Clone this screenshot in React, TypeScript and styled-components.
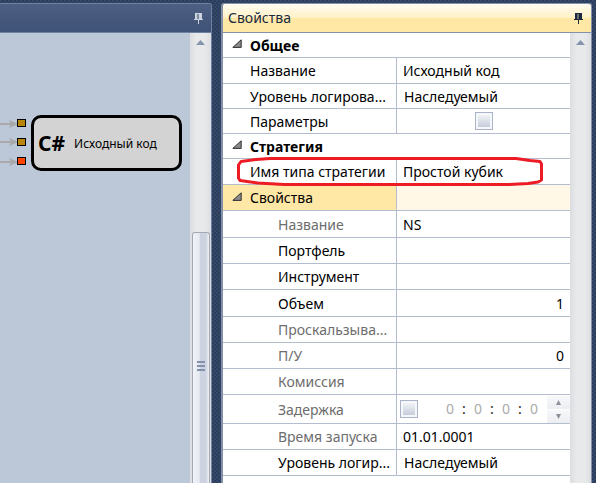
import React from "react";
import styled, { createGlobalStyle, css } from "styled-components";

const GlobalStyle = createGlobalStyle`
  * { box-sizing: border-box; }
  body {
    margin: 0;
    background-color: #2c3d5b;
    background-image:
      radial-gradient(circle at 1px 1px, #35496a 1px, transparent 1px),
      radial-gradient(circle at 3px 3px, #35496a 1px, transparent 1px);
    background-size: 4px 4px;
    font-family: "Noto Sans", "Open Sans", sans-serif;
    font-size: 14px;
    color: #000;
  }
  button, input, select { font: inherit; color: inherit; }
`;

const Workspace = styled.main`
  display: grid;
  grid-template-columns: minmax(0, 4fr) minmax(0, 7fr);
  gap: 9px;
  height: 100vh;
  padding: 3px 4px 0 0;
  overflow: hidden;
`;

const Panel = styled.section<{ $active?: boolean }>`
  display: flex;
  flex-direction: column;
  min-width: 0;
  min-height: 0;
  border: solid ${(p) => (p.$active ? "#8591a9" : "#6f80a0")};
  border-width: ${(p) => (p.$active ? "1px 1px 0 2px" : "1px 1px 0 0")};
  border-radius: ${(p) => (p.$active ? "3px 3px 0 0" : "0 3px 0 0")};
  overflow: hidden;
`;

const TitleBar = styled.header<{ $active?: boolean }>`
  display: flex;
  flex: none;
  align-items: center;
  justify-content: space-between;
  height: 29px;
  padding: 0 8px 0 5px;
  border-bottom: 1px solid ${(p) => (p.$active ? "#8591a9" : "#6f80a0")};
  color: ${(p) => (p.$active ? "#1b293e" : "#ced4df")};
  background: ${(p) =>
    p.$active
      ? "linear-gradient(#fffcf2, #fff0c4 50%, #ffe8a6 51%, #ffe8a6)"
      : "linear-gradient(#4d6082, #3f5277)"};
`;

const Title = styled.h2`
  margin: 0;
  font-size: 14px;
  line-height: 20px;
  font-weight: 400;
`;

const PinButton = styled.button`
  display: flex;
  padding: 0;
  border: 0;
  background: none;
`;

const PanelBody = styled.div`
  display: flex;
  flex: 1;
  min-height: 0;
`;

const Canvas = styled.div`
  position: relative;
  flex: 1;
  min-width: 0;
  overflow: hidden;
  background: #bcc7d8;
`;

const Links = styled.svg`
  position: absolute;
  left: 0;
  top: 84px;
`;

const Node = styled.article`
  position: absolute;
  left: 31px;
  top: 82px;
  display: flex;
  align-items: center;
  gap: 9px;
  width: 151px;
  height: 56px;
  padding-left: 4px;
  border: 3px solid #000;
  border-radius: 10px;
  background: #d3d3d3;
  font-size: 12px;
  white-space: nowrap;
`;

const NodeMark = styled.strong`
  font-size: 21px;
  font-weight: 700;
`;

const ScrollTrack = styled.div`
  display: flex;
  flex: none;
  flex-direction: column;
  align-items: center;
  width: 21px;
  background: linear-gradient(90deg, #dcdde0, #e8e9eb 30%, #e8e9eb 70%, #dcdee2);
`;

const ScrollUp = styled.button`
  display: flex;
  justify-content: center;
  width: 100%;
  padding: 7px 0 0;
  border: 0;
  background: none;
`;

const Thumb = styled.div`
  display: flex;
  flex: 1;
  flex-direction: column;
  align-items: center;
  width: 18px;
  margin-top: 187px;
  padding-top: 128px;
  border: 1px solid #a3a8b3;
  border-bottom: 0;
  border-radius: 3px 3px 0 0;
  background: linear-gradient(90deg, #f2f4f8, #e4e8f0 40%, #ccd2df 45%, #ccd2df 80%, #eef0f5);
`;

const Sheet = styled.div`
  flex: 1;
  min-width: 0;
  background: #fff;
`;

const line = "#b4bccf";

const GroupRow = styled.div`
  display: flex;
  align-items: center;
  height: 25px;
  border-bottom: 1px solid ${line};
`;

const GroupName = styled.h3`
  margin: 0;
  padding-top: 2px;
  font-size: 14px;
  line-height: 20px;
  font-weight: 700;
`;

const Expander = styled.button`
  display: flex;
  flex: none;
  width: 27px;
  padding: 0 0 4px 9px;
  border: 0;
  background: none;
`;

const Row = styled.div<{ $height: number; $selected?: boolean }>`
  position: relative;
  display: grid;
  grid-template-columns: 174px minmax(0, 1fr);
  height: ${(p) => p.$height}px;
  border-bottom: 1px solid ${line};
  background: ${(p) => (p.$selected ? "#fff8e7" : "#fff")};
`;

const NameCell = styled.div<{ $nested?: boolean; $selected?: boolean; $muted?: boolean }>`
  display: flex;
  align-items: center;
  min-width: 0;
  padding-top: 1px;
  padding-left: ${(p) => (p.$nested ? 55 : p.$selected ? 0 : 27)}px;
  border-right: 1px solid ${line};
  line-height: 20px;
  white-space: nowrap;
  color: ${(p) => (p.$muted ? "#6d6d6d" : "#000")};
  background: ${(p) => (p.$selected ? "#ffe8a6" : "transparent")};
`;

const ValueCell = styled.div<{ $center?: boolean; $flush?: boolean }>`
  display: flex;
  align-items: center;
  min-width: 0;
  padding-top: ${(p) => (p.$center || p.$flush ? 0 : 1)}px;
  justify-content: ${(p) => (p.$center ? "center" : "flex-start")};
`;

const fieldStyle = css`
  width: 100%;
  height: 20px;
  border: 0;
  outline: 0;
  background: transparent;
  line-height: 20px;
`;

const TextField = styled.input<{ $number?: boolean }>`
  ${fieldStyle}
  padding: 0 6px;
  text-align: ${(p) => (p.$number ? "right" : "left")};
`;

const Choice = styled.select`
  ${fieldStyle}
  padding: 0 7px;
  appearance: none;
`;

const Tick = styled.input`
  appearance: none;
  flex: none;
  width: 18px;
  height: 18px;
  margin: 0;
  padding: 2px;
  border: 1px solid #aab3c8;
  background: linear-gradient(#f0f2f6, #c6cddb) content-box, #f6f7fa;
`;

const TimeEditor = styled.div`
  display: flex;
  flex: 1;
  align-items: center;
  align-self: stretch;
  gap: 6px;
  padding-left: 3px;
`;

const TimeParts = styled.div`
  display: flex;
  flex: 1;
  justify-content: flex-end;
  color: #1e1e1e;
  line-height: 20px;
`;

const TimePart = styled.input`
  width: 14px;
  height: 20px;
  padding: 0;
  border: 0;
  background: transparent;
  color: #acacac;
  text-align: center;
`;

const Colon = styled.span`
  width: 14px;
  text-align: center;
`;

const Spinner = styled.div`
  display: flex;
  flex-direction: column;
  gap: 1px;
  width: 23px;
`;

const SpinButton = styled.button`
  display: flex;
  align-items: center;
  justify-content: center;
  height: 13px;
  padding: 0;
  border: 0;
  background: linear-gradient(#f7f8fa, #eceef2);
`;

const Marker = styled.svg`
  position: absolute;
  left: 13px;
  top: -3px;
  z-index: 1;
  pointer-events: none;
`;

const Pin = ({ dark }: { dark?: boolean }) => (
  <svg width="9" height="11" viewBox="0 0 9 11" shapeRendering="crispEdges">
    <path d="M1 0h7v6h1v1H5v4H4V7H0V6h1z" fill="currentColor" />
    <path d="M3 1h2v5H3z" fill={dark ? "#6c6f70" : "#7b8aa5"} />
  </svg>
);

const ArrowUp = () => (
  <svg width="9" height="5" viewBox="0 0 9 5">
    <path d="M0 5L4.5 0L9 5z" fill="#8694ad" />
  </svg>
);

const ExpandGlyph = () => (
  <svg width="10" height="9" viewBox="0 0 10 9">
    <path d="M.8 8.4L9.2.8V8.4z" fill="#8a8a8a" stroke="#303030" strokeWidth="1" />
  </svg>
);

const SpinGlyph = ({ down }: { down?: boolean }) => (
  <svg width="5" height="5" viewBox="0 0 5 5">
    <path d={down ? "M0 0H5L2.5 5z" : "M0 5L2.5 0L5 5z"} fill="#8d919b" />
  </svg>
);

const Grip = () => (
  <svg width="8" height="10" viewBox="0 0 8 10" shapeRendering="crispEdges">
    <path d="M0 0h8v2H0zM0 4h8v2H0zM0 8h8v2H0z" fill="#8392aa" />
  </svg>
);

type Item = {
  id: string;
  label: string;
  height: number;
  nested?: boolean;
  muted?: boolean;
  kind?: "text" | "number" | "choice" | "check" | "time";
  value?: string;
  marked?: boolean;
};

const general: Item[] = [
  { id: "title", label: "Название", height: 26, value: "Исходный код" },
  { id: "log", label: "Уровень логирова...", height: 25, kind: "choice", value: "Наследуемый" },
  { id: "params", label: "Параметры", height: 25, kind: "check" },
];

const strategy: Item[] = [
  { id: "type", label: "Имя типа стратегии", height: 26, value: "Простой кубик", marked: true },
];

const nested: Item[] = [
  { id: "name", label: "Название", height: 27, muted: true, value: "NS" },
  { id: "portfolio", label: "Портфель", height: 26 },
  { id: "security", label: "Инструмент", height: 26 },
  { id: "volume", label: "Объем", height: 27, kind: "number", value: "1" },
  { id: "slippage", label: "Проскальзыва...", height: 26, muted: true },
  { id: "pnl", label: "П/У", height: 26, muted: true, kind: "number", value: "0" },
  { id: "commission", label: "Комиссия", height: 26, muted: true },
  { id: "latency", label: "Задержка", height: 29, muted: true, kind: "time" },
  { id: "started", label: "Время запуска", height: 26, muted: true, value: "01.01.0001" },
  { id: "nested-log", label: "Уровень логир...", height: 26, kind: "choice", value: "Наследуемый" },
].map((item) => ({ ...item, nested: true }) as Item);

const Editor = ({ item }: { item: Item }) => {
  switch (item.kind) {
    case "check":
      return <Tick type="checkbox" id={item.id} />;
    case "choice":
      return (
        <Choice id={item.id} defaultValue={item.value}>
          <option>{item.value}</option>
        </Choice>
      );
    case "time":
      return (
        <TimeEditor>
          <Tick type="checkbox" id={item.id} />
          <TimeParts>
            {["Дни", "Часы", "Минуты", "Секунды"].map((part, i) => (
              <React.Fragment key={part}>
                {i > 0 && <Colon>:</Colon>}
                <TimePart aria-label={part} defaultValue="0" />
              </React.Fragment>
            ))}
          </TimeParts>
          <Spinner>
            <SpinButton aria-label="Больше"><SpinGlyph /></SpinButton>
            <SpinButton aria-label="Меньше"><SpinGlyph down /></SpinButton>
          </Spinner>
        </TimeEditor>
      );
    default:
      return <TextField id={item.id} $number={item.kind === "number"} defaultValue={item.value} />;
  }
};

const PropertyRow = ({ item }: { item: Item }) => (
  <Row $height={item.height}>
    <NameCell as="label" htmlFor={item.id} $nested={item.nested} $muted={item.muted}>
      {item.label}
    </NameCell>
    <ValueCell $center={item.kind === "check"} $flush={item.kind === "time"}>
      <Editor item={item} />
    </ValueCell>
    {item.marked && (
      <Marker width="308" height="32" viewBox="0 0 308 32" fill="none" stroke="#ed1c24" strokeWidth="3" strokeLinejoin="round">
        <path d="M34 2.5H280L294 4.5L304 5.5L305.500 8V24L302 26L292 27.500L273 28.500H48L22 27L4 24.500L2.500 22V9L5 5.500L20 3.500Z" />
      </Marker>
    )}
  </Row>
);

const Group = ({ name }: { name: string }) => (
  <GroupRow>
    <Expander aria-label={name}><ExpandGlyph /></Expander>
    <GroupName>{name}</GroupName>
  </GroupRow>
);

const ports = [
  { y: 2, arrow: 7, fill: "#b8860b" },
  { y: 21, arrow: 25, fill: "#b8860b" },
  { y: 40, arrow: 45, fill: "#ff4500" },
];

export default function App() {
  return (
    <>
      <GlobalStyle />
      <Workspace>
        <Panel>
          <TitleBar>
            <span />
            <PinButton aria-label="Закрепить"><Pin /></PinButton>
          </TitleBar>
          <PanelBody>
            <Canvas>
              <Links width="28" height="54" viewBox="0 0 28 54">
                {ports.map((p) => (
                  <g key={p.y}>
                    <path d={`M0 ${p.arrow}H12`} stroke="#a9a9a9" strokeWidth="2" />
                    <path d={`M9 ${p.arrow - 4}L18 ${p.arrow}L9 ${p.arrow + 4}L11 ${p.arrow}z`} fill="#a9a9a9" />
                    <rect x="17.500" y={p.y + 0.5} width="8" height="7" fill={p.fill} stroke="#000" />
                  </g>
                ))}
              </Links>
              <Node>
                <NodeMark>C#</NodeMark>
                <span>Исходный код</span>
              </Node>
            </Canvas>
            <ScrollTrack>
              <ScrollUp aria-label="Вверх"><ArrowUp /></ScrollUp>
              <Thumb><Grip /></Thumb>
            </ScrollTrack>
          </PanelBody>
        </Panel>
        <Panel $active>
          <TitleBar $active>
            <Title>Свойства</Title>
            <PinButton aria-label="Закрепить"><Pin dark /></PinButton>
          </TitleBar>
          <PanelBody>
            <Sheet>
              <Group name="Общее" />
              {general.map((item) => <PropertyRow key={item.id} item={item} />)}
              <Group name="Стратегия" />
              {strategy.map((item) => <PropertyRow key={item.id} item={item} />)}
              <Row $height={26} $selected>
                <NameCell $selected>
                  <Expander aria-label="Свойства"><ExpandGlyph /></Expander>
                  Свойства
                </NameCell>
                <ValueCell />
              </Row>
              {nested.map((item) => <PropertyRow key={item.id} item={item} />)}
            </Sheet>
            <ScrollTrack>
              <ScrollUp aria-label="Вверх"><ArrowUp /></ScrollUp>
            </ScrollTrack>
          </PanelBody>
        </Panel>
      </Workspace>
    </>
  );
}
